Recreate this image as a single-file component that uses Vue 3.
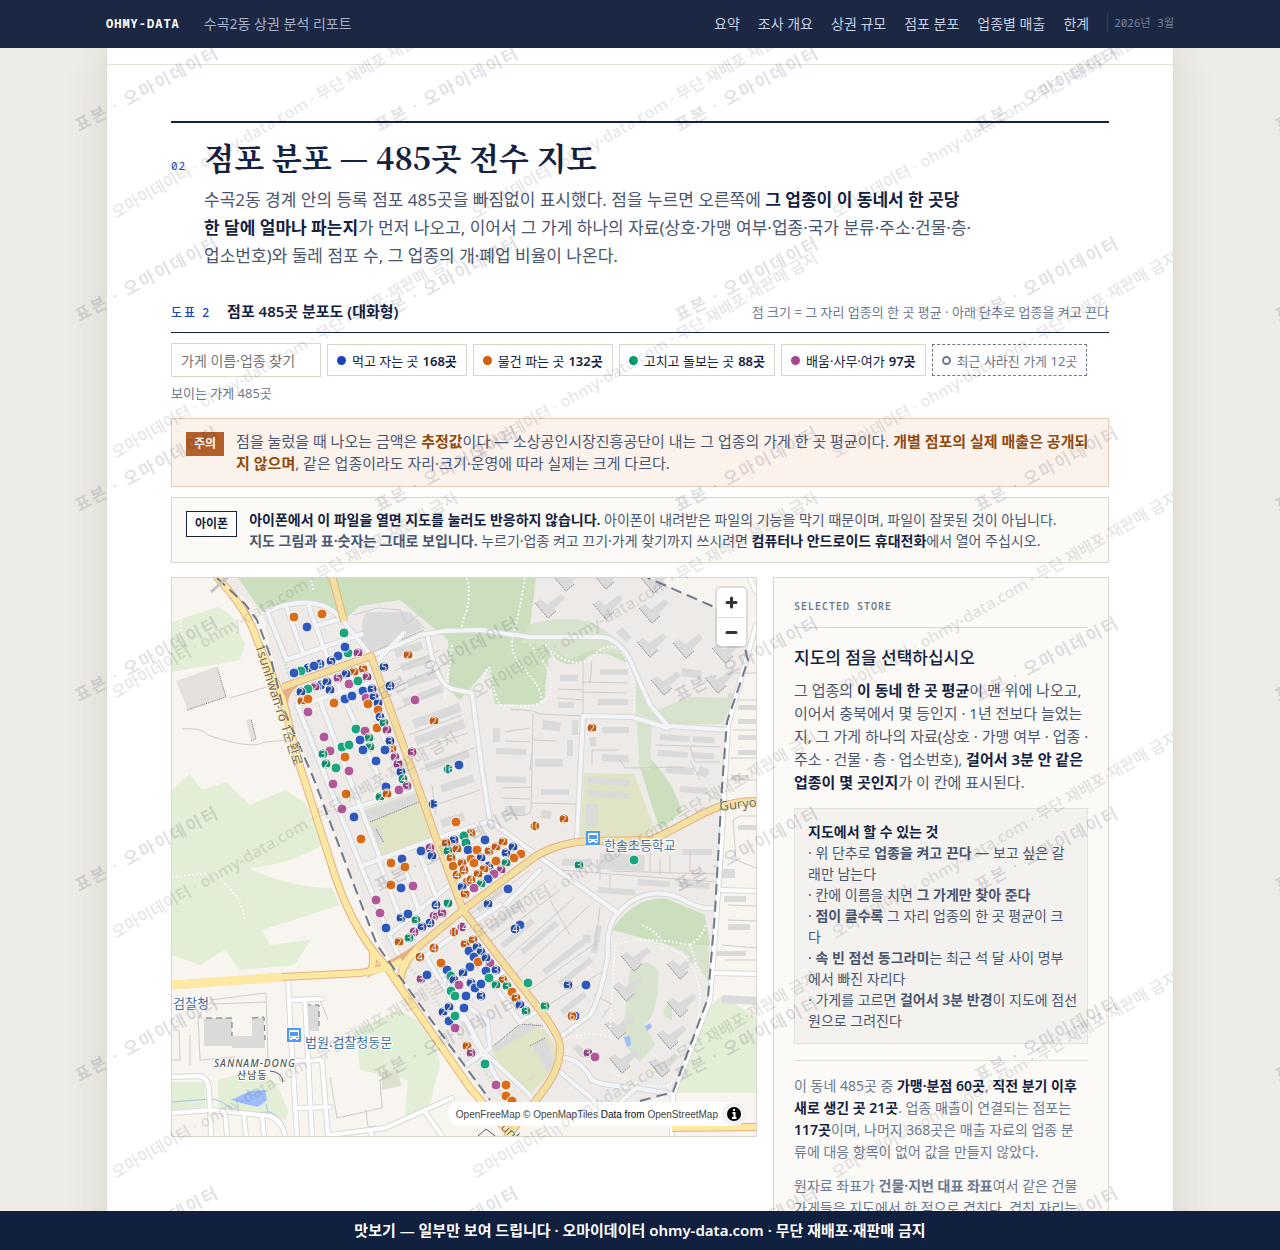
<script setup>
import { ref, computed } from 'vue'

const nav = ['요약', '조사 개요', '상권 규모', '점포 분포', '업종별 매출', '한계']

const groups = [
  { key: 'b', label: '먹고 자는 곳', count: 168, color: '#1a45b8' },
  { key: 'o', label: '물건 파는 곳', count: 132, color: '#d55e00' },
  { key: 'g', label: '고치고 돌보는 곳', count: 88, color: '#009e73' },
  { key: 'p', label: '배움·사무·여가', count: 97, color: '#a8478c' }
]
const colors = { b: '#2f58bd', o: '#d96c18', g: '#1aa57d', p: '#b05898' }
const darks = { b: '#274a9e', o: '#bd5a10', g: '#168a68', p: '#93437e' }
const off = ref([])
const toggle = (k) => {
  off.value = off.value.includes(k) ? off.value.filter((x) => x !== k) : [...off.value, k]
}

// x, y, group, number of stores that share the spot
const stores = `294,617,o 322,614,o 307,627,b 344,633,g 348,653,g 345,647,b 358,653,p,2 338,656,b 331,661,b,5 320,664,b,4
308,668,b,1 314,666,b 301,671,g 294,673,b 408,655,o,2 384,667,b,5 390,686,b,4 415,700,p 434,721,o,2 363,669,o,5
354,672,o,2 346,674,b,2 367,677,p,2 338,678,p,5 349,684,p 358,681,g 321,685,b,1 327,682,b,2 330,690,b,2 315,687,p,2
308,689,g 301,692,b,2 302,701,o,2 308,699,o 308,712,p 363,691,b 372,689,b,3 366,698,p 374,697,b,3 378,703,b,7
368,704,o 345,699,b 352,696,b 334,703,o 378,710,o 380,717,b,4 377,728,o 384,723,g,3 387,730,p,2 324,737,p
356,729,g 365,731,p 369,738,g,2 360,740,b 370,747,g,2 363,750,b 392,749,o,8 390,741,b,3 385,750,b 395,757,p,2
398,764,p,5 412,752,p,3 342,747,g 349,745,g 330,751,p 323,754,g,3 345,757,o 376,761,b 459,765,b 326,764,g,2
336,768,g 349,771,p 333,784,p 346,794,o 342,809,p 354,817,b 361,839,o 401,772,b,3 403,779,g,4 407,786,p,3
399,790,p 386,787,b 380,797,g,2 387,794,o,2 448,769,g,16 433,804,b,13 456,822,o 471,833,o,8 454,840,b,3 446,843,o,3
464,836,g 466,843,g 448,851,g,3 430,848,p,4 432,856,b,2 421,851,b 457,849,o,2 451,858,o,3 468,850,b 453,866,o
462,863,o,2 457,875,o,4 464,870,o,4 467,882,o 462,887,b,2 465,894,o,5 402,859,b 391,863,o 405,867,o 391,885,o
401,888,b 413,886,p 376,900,p 380,913,p 386,928,b 401,918,b,3 408,914,b 436,905,b,4 448,903,g,7 434,916,p,6
442,913,p,5 416,920,g,3 430,923,b,4 422,927,b,3 414,932,p,4 409,938,g,3 399,942,o,2 434,948,o,4 454,932,o,10
462,927,p,14 535,826,o,10 564,819,o,2 579,865,g,3 634,860,g 592,728,o,2 485,840,b 477,850,o 489,851,o,3 496,847,o,2
503,842,o,2 506,853,b,3 513,847,b,2 521,854,o 514,858,o 481,858,b,2 471,859,o 474,863,o 489,866,b,4 496,861,o
506,863,g,2 501,870,p,2 484,869,o,2 494,874,p 478,874,o,2 471,880,o,4 488,879,b 481,884,g,2 474,888,p 508,889,b
488,904,b,2 520,925,b 515,929,b,4 465,944,o,3 473,940,o,3 469,951,b 477,947,b,2 481,952,b,2 474,957,b 478,962,o
490,963,p 486,958,b,2 470,967,b 486,971,b 496,970,b,3 463,973,b,2 489,978,g 503,980,o,3 496,985,g,2 507,986,g,3
528,983,g 568,985,b,3 586,985,b 512,992,o 516,998,o,3 520,1005,b,2 526,1011,g,3 545,1006,g,3 575,1016,b 572,1016,o,6
471,983,b,2 475,988,b 481,984,b 466,996,b 481,996,b,3 464,1008,b 467,1046,o,2 471,1053,p,3 485,1064,g 496,1085,p
506,1085,o 506,1096,o 512,1101,o 588,1053,p,3 595,1057,p 420,957,o,4 441,963,o 421,979,p,3 427,975,b 447,970,b
451,976,g 454,980,b,2 459,985,p 451,991,g 455,996,g 443,1012,b,2 449,1007,b,2 449,1021,b 455,1016,g 455,1028,p`
  .split(/\s+/)
  .map((s) => {
    const [x, y, k, n] = s.split(',')
    return { x: +x, y: +y, k, n }
  })
const shown = computed(() => stores.filter((s) => !off.value.includes(s.k)))

const localRoads = [
  'M267 611 L286 658 M286 606 L303 653 M308 604 L331 668 M267 611 Q320 590 344 622 L371 656',
  'M286 660 L362 634 M316 626 L340 619',
  'M297 705 L361 866 M320 701 L380 858 M342 694 L378 775 M363 686 L402 782 M331 668 L342 694',
  'M298 706 L380 680 M340 813 L417 788 M361 866 L437 838 M385 750 L400 742',
  'M361 866 L389 935 M378 858 L400 918 M401 858 L418 908 M418 850 L436 896 M389 935 L451 884 M389 935 L401 960',
  'M437 838 L490 821 L538 856 L618 913 M404 633 L376 662',
  'M371 656 L410 640 L420 635 L445 631 M428 638 Q436 684 452 689 L472 693 L482 770 L490 821',
  'M445 631 L480 630 L530 637 L600 637 Q617 637 630 660 L650 705 L668 726 L727 730',
  'M577 838 L583 716 L632 717 L668 728 M618 913 C640 888 665 892 680 898 Q700 910 712 908 M618 913 Q606 925 608 955 Q600 1000 590 1015 L562 1036',
  'M425 955 L505 1092 L530 1115 M440 970 L482 1050 L530 1095 M466 946 L520 1022 M420 960 L455 935 L500 905 M505 905 L540 870',
  'M505 970 L470 998 M520 1022 L545 1006 M465 1005 L487 1020 L490 1048 L466 1065',
  'M562 1058 Q580 1058 592 1080 Q600 1085 636 1088 L672 1094 M560 1072 L615 1118 M636 1088 L610 1112 M530 1095 L560 1136'
]

const outerRoads = [
  'M750 578 L756 592 M756 625 L728 725 L721 850 L714 950 L710 1000 L673 1095 L672 1136',
  'M288 978 L290 1020 L297 1136 M305 1000 L312 1136 M290 1000 L322 999 M293 1061 L322 1060 L328 1136 M297 1108 L330 1107',
  'M172 1077 L200 1076 Q208 1078 209 1090 L211 1136 M172 1113 L210 1110 L270 1116 Q282 1120 285 1136 M225 1113 L227 1136 M244 1115 L246 1136 M262 1116 L264 1136',
  'M330 1135 L385 1128 L452 1098 M425 1112 L442 1136 M370 1131 L372 1136 M722 890 L756 891 M714 973 L756 974'
]

const lanes = [
  'M353 615 L378 608 L400 610 L407 624 M394 671 L440 650 M390 690 L452 661 M396 710 L440 690 M409 735 L462 715 M415 750 L468 733 M420 770 L474 748 M435 805 L480 790 M432 785 L436 815',
  'M583 658 L583 716 M583 682 L628 683 M583 692 L626 693 M558 689 L584 690 M592 661 L590 683 M557 698 L583 700 M510 709 L533 711 L540 714 L583 716',
  'M533 714 Q532 770 531 810 Q530 817 515 815 L503 814 M532 740 L556 741 M532 753 L530 770 M505 732 L530 728 M505 741 L530 742 M502 788 L531 787 M502 798 L530 799 M531 803 L577 804',
  'M592 750 L618 750 M592 750 L592 765 M655 745 L720 747 M690 747 L695 762 L720 762 M620 760 L625 768 L684 767 M690 760 L700 780',
  'M600 862 L600 880 M610 875 L610 890 M650 840 L650 872 M660 858 L660 875 M670 855 L670 872 M690 850 L690 872 M610 871 L716 874 M560 870 L716 882',
  'M470 915 L530 870 M480 930 L548 880 M490 942 L560 890 M503 962 L575 897 M515 975 L590 905 M530 990 L600 940 M548 1005 L605 970',
  'M600 907 L595 950 M550 900 L570 935 M594 995 L612 1004 L602 1018 M530 1080 L534 1073',
  'M733 820 L740 816 L756 816 M733 820 L736 860 L756 868 M735 673 L756 673 M733 700 L756 700 M733 730 L756 730 M730 758 L756 758 M728 780 L756 780',
  'M210 1000 L266 993 L268 1060 M199 1019 L205 1000 M212 1004 L266 1002 M173 1030 L179 1030 L180 1060 L172 1060 M190 1035 L190 1065 M198 1015 L200 1060 L235 1057',
  'M230 698 L280 683 M182 729 Q200 727 208 735 Q250 750 265 742 L290 740 M330 1077 L337 1118 L382 1108 L380 1080 M366 1110 L368 1127 L376 1126',
  'M320 1000 L328 1020 M405 625 L422 612 M722 945 L756 948 M725 960 L756 960 M728 905 L756 906 M728 920 L756 921'
]

const paths = [
  'M182 635 L180 620 L190 598 L205 598 L213 578 M467 578 Q472 600 463 620 L461 632 M525 578 Q520 610 514 632 Q508 650 520 665 Q545 690 541 703',
  'M313 590 L311 578 M452 645 L445 700 M545 645 Q570 670 590 660 Q605 640 620 650 Q636 670 634 712',
  'M480 690 Q485 665 490 668 Q492 690 500 705 Q540 710 550 695 Q555 670 530 645',
  'M172 877 L210 873 Q240 890 245 920 M642 925 Q665 935 662 950 L670 945 M706 925 Q700 940 690 945 L700 975 M690 945 Q640 935 615 945 L610 1030',
  'M610 1036 Q570 1030 560 1045 M610 1070 Q640 1090 670 1085 Q700 1050 700 990 Q690 950 670 950'
]

const greens = [
  'M238 578 L470 578 L536 578 L530 625 Q560 615 590 622 Q625 640 632 665 L610 655 Q590 650 583 662 Q560 670 550 650 L545 685 Q548 702 535 705 L495 704 L488 668 L460 700 L449 690 L448 640 L400 600 L360 606 L344 620 Q310 594 262 612 Z',
  'M612 930 Q635 895 668 899 L705 915 L710 945 L680 948 Z',
  'M638 760 L652 760 Q675 785 682 812 L660 830 L650 800 Z'
]
const paleGreens = [
  'M172 622 L218 607 L232 616 L245 645 L240 660 L172 672 Z',
  'M172 790 L190 774 L202 790 L226 782 L250 805 L285 790 L305 802 L322 845 Q290 865 248 868 Q290 888 332 888 L340 905 L262 930 L270 945 L310 940 L295 965 L240 970 L225 950 L200 965 L172 955 Z',
  'M400 1010 L432 1030 L440 1065 L428 1110 L405 1115 L408 1080 L360 1070 L356 1030 Z',
  'M172 1082 L205 1082 L205 1107 L172 1110 Z M218 1080 L255 1070 L275 1082 L288 1110 L286 1120 L218 1110 Z',
  'M722 995 L756 1018 L756 1093 L675 1093 L706 1010 Z'
]
const midGreens = [
  'M530 625 Q560 615 590 622 Q625 640 636 680 L636 712 L660 725 L722 724 L734 698 L690 697 L652 712 L625 655 L590 650 L570 660 L545 645 L520 643 Z',
  'M636 712 L652 726 L650 770 L640 770 Z',
  'M630 970 Q645 955 658 970 Q660 1010 645 1025 L655 1045 L640 1062 Q615 1040 625 1015 Z',
  'M672 1000 Q655 1015 672 1020 Z M650 945 Q690 940 712 990 L708 945 Z'
]

const vShapes = [
  [566, 580], [606, 578], [654, 582], [548, 607], [606, 608], [652, 612], [650, 646], [686, 647], [725, 652], [664, 684], [718, 682],
  [634, 960], [680, 968], [626, 990], [680, 1006], [618, 1028], [670, 1038], [622, 1062], [662, 1066]
]
const blocks = [
  [560, 675, 18, 6, 0], [600, 669, 28, 6, 0], [558, 702, 16, 6, 0], [598, 699, 30, 6, 0], [493, 728, 7, 14, 0], [543, 720, 18, 9, 8],
  [572, 720, 6, 15, 0], [602, 727, 27, 6, 0], [496, 748, 30, 6, 2], [567, 740, 6, 16, 0], [590, 737, 6, 9, 0], [602, 754, 27, 7, 3],
  [535, 759, 28, 8, 0], [660, 734, 30, 6, 4], [693, 736, 22, 6, 4], [658, 750, 30, 6, 4], [692, 752, 22, 6, 4], [496, 776, 30, 6, 2],
  [541, 789, 28, 6, 0], [505, 806, 20, 10, 0], [666, 766, 28, 7, 4], [700, 766, 10, 9, 20], [680, 786, 28, 6, 4], [542, 810, 10, 8, 10],
  [586, 804, 12, 22, 0], [588, 777, 42, 6, 4], [588, 790, 42, 6, 4], [562, 859, 30, 7, 0], [600, 853, 45, 16, 3], [682, 849, 30, 6, 0],
  [638, 879, 32, 6, 4], [680, 881, 30, 6, 4], [598, 887, 38, 6, 4], [728, 693, 10, 5, 0], [738, 705, 18, 5, 0], [738, 719, 18, 5, 0],
  [738, 735, 18, 5, 0], [738, 750, 18, 5, 0], [731, 775, 18, 5, 0], [738, 825, 18, 5, 0], [721, 869, 14, 9, 0], [724, 896, 22, 6, 0],
  [728, 924, 22, 6, 0], [716, 951, 30, 5, 0], [722, 995, 34, 8, 3], [394, 650, 28, 8, -18], [400, 664, 34, 8, -18], [406, 680, 36, 8, -18],
  [402, 699, 42, 8, -20], [412, 720, 50, 9, -20], [414, 737, 52, 9, -20], [424, 764, 46, 8, -18], [440, 785, 34, 8, -18], [440, 820, 24, 8, -18],
  [476, 908, 34, 6, -40], [488, 928, 42, 6, -40], [500, 944, 40, 6, -40], [520, 950, 46, 6, -40], [542, 970, 50, 6, -38], [558, 982, 40, 6, -38],
  [560, 1010, 30, 6, -38], [596, 925, 6, 28, 10], [583, 935, 8, 8, 0], [306, 1005, 13, 26, 0], [204, 1018, 28, 28, 0], [232, 1036, 33, 12, 0],
  [252, 1018, 12, 20, 0], [578, 1044, 14, 7, 45], [622, 627, 14, 8, 45], [682, 668, 20, 8, 8]
]
</script>

<template>
  <div class="app">
    <header class="topbar">
      <div class="bar-inner">
        <a class="brand" href="#top">OHMY-DATA</a>
        <span class="doc">수곡2동 상권 분석 리포트</span>
        <nav>
          <a v-for="n in nav" :key="n" href="#map">{{ n }}</a>
        </nav>
        <time datetime="2026-03">2026년 3월</time>
      </div>
    </header>

    <main>
      <div class="sheet">
        <div class="prev"></div>
        <section id="map">
          <div class="head">
            <span class="no">02</span>
            <h2>점포 분포 — 485곳 전수 지도</h2>
          </div>
          <p class="lede">
            수곡2동 경계 안의 등록 점포 485곳을 빠짐없이 표시했다. 점을 누르면 오른쪽에 <b>그 업종이 이 동네서 한 곳당<br />
            한 달에 얼마나 파는지</b>가 먼저 나오고, 이어서 그 가게 하나의 자료(상호·가맹 여부·업종·국가 분류·주소·건물·층·<br />업소번호)와 둘레 점포 수, 그 업종의 개·폐업 비율이 나온다.
          </p>

          <div class="fig">
            <span class="fig-no">도표 2</span>
            <h3>점포 485곳 분포도 (대화형)</h3>
            <span class="fig-note">점 크기 = 그 자리 업종의 한 곳 평균 · 아래 단추로 업종을 켜고 끈다</span>
          </div>

          <div class="filters">
            <input type="text" placeholder="가게 이름·업종 찾기" aria-label="가게 이름·업종 찾기" />
            <button v-for="g in groups" :key="g.key" class="chip" @click="toggle(g.key)">
              <i :style="{ background: g.color }"></i>{{ g.label }} <b>{{ g.count }}곳</b>
            </button>
            <button class="chip gone"><i></i>최근 사라진 가게 12곳</button>
            <span class="count">보이는 가게 485곳</span>
          </div>

          <div class="notice warn">
            <span class="tag">주의</span>
            <p>점을 눌렀을 때 나오는 금액은 <b>추정값</b>이다 — 소상공인시장진흥공단이 내는 그 업종의 가게 한 곳 평균이다. <b>개별 점포의 실제 매출은 공개되<br />지 않으며</b>, 같은 업종이라도 자리·크기·운영에 따라 실제는 크게 다르다.</p>
          </div>
          <div class="notice phone">
            <span class="tag">아이폰</span>
            <p><b>아이폰에서 이 파일을 열면 지도를 눌러도 반응하지 않습니다.</b> 아이폰이 내려받은 파일의 기능을 막기 때문이며, 파일이 잘못된 것이 아닙니다.<br /><strong>지도 그림과 표·숫자는 그대로 보입니다.</strong> 누르기·업종 켜고 끄기·가게 찾기까지 쓰시려면 <b>컴퓨터나 안드로이드 휴대전화</b>에서 열어 주십시오.</p>
          </div>

          <div class="cols">
            <div class="map">
              <svg class="canvas" viewBox="172 578 584 558" preserveAspectRatio="xMidYMid slice" role="img" aria-label="수곡2동 점포 지도">
                <rect x="172" y="578" width="584" height="558" fill="#f8f4f0" />
                <path d="M217 578 L262 612 L283 700 L315 780 L352 880 L387 955 L490 1104 L640 1104 L673 1092 L708 998 L722 787 L727 722 L748 650 L712 606 L648 578 Z" fill="#edeae7" />
                <path v-for="d in paleGreens" :key="d" :d="d" fill="#e2eed5" />
                <path v-for="d in greens" :key="d" :d="d" fill="#cbdfbf" />
                <path v-for="d in midGreens" :key="d" :d="d" fill="#d8e3ce" />
                <path d="M363 810 L418 792 L433 837 L379 857 Z M584 773 L634 774 L640 790 L655 830 L638 842 L580 836 Z M492 1050 L530 1022 L545 1030 L557 1048 L553 1070 L532 1092 L510 1080 Z" fill="#e0e4c4" />
                <path d="M382 1072 L398 1070 L401 1086 L382 1090 Z" fill="#dde0cb" />
                <g fill="#dadada">
                  <path d="M363 620 L366 612 L410 612 L425 628 L371 652 L361 642 Z" />
                  <path d="M176 681 L216 667 L226 697 L188 710 Z M246 720 L251 719 L256 739 L251 740 Z" fill="#e4e0dc" />
                  <path d="M364 812 L414 794 L419 802 L370 822 Z M370 826 L379 825 L384 842 L376 845 Z" />
                  <path d="M492 1047 L520 1024 L543 1024 L495 1052 Z M532 1046 L545 1036 L555 1062 L548 1072 Z" />
                  <path v-for="v in vShapes" :key="v.join()" :transform="`translate(${v[0]} ${v[1]}) scale(.8)`" d="M-16 -5 L-9 -10 L-1 -3 L16 -16 L21 -11 L8 2 L10 5 L0 14 Z" />
                  <rect v-for="b in blocks" :key="b.join()" :x="b[0]" :y="b[1]" :width="b[2]" :height="b[3]" :transform="`rotate(${b[4]} ${b[0]} ${b[1]})`" />
                </g>
                <g fill="none" stroke="#777" stroke-width="1" stroke-dasharray="1 1">
                  <path d="M371 653 L424 630 M187 710 L226 697 L217 667 M251 741 L256 739 L251 719 M370 822 L419 802 M376 829 L384 843 M492 1047 L520 1024 L543 1026 M530 1046 L545 1038" />
                  <path d="M206 1018 L232 1018 L232 1036 M252 1018 L264 1017 L265 1040 M305 1005 L319 1005 L319 1026" stroke-dasharray="6 4" />
                  <path v-for="v in vShapes" :key="v.join()" :transform="`translate(${v[0]} ${v[1]}) scale(.8)`" d="M-16 -5 L0 14 L10 5" stroke-dasharray="2 1" />
                </g>
                <path d="M231 1100 L250 1091 L265 1090 L267 1100 L258 1107 L245 1104 Z M624 1037 L630 1036 L631 1045 L627 1047 Z M645 1026 L650 1023 L652 1027 L647 1031 Z" fill="#9dbdfc" />
                <path d="M172 1102 L210 1099 Q218 1099 228 1106 Q240 1115 270 1112 Q285 1118 287 1136 M266 1104 L268 1112" fill="none" stroke="#9cc6ee" stroke-width="1" />
                <path v-for="d in lanes" :key="d" :d="d" class="lane" />
                <path v-for="d in paths" :key="d" :d="d" class="foot" />
                <path d="M267 611 L300 705 L361 866 L398 955 L425 985 L505 1100" class="foot tree" />
                <g class="case"><path v-for="d in [...outerRoads, ...localRoads]" :key="d" :d="d" /></g>
                <g class="road"><path v-for="d in localRoads" :key="d" :d="d" /></g>
                <g class="road outer"><path v-for="d in outerRoads" :key="d" :d="d" /></g>
                <g class="main-case">
                  <path d="M332 576 L344 621 M283 687 L371 656 L410 764 L436 838 L463 910 L497 955 L540 1010 Q562 1038 560 1050 Q560 1070 540 1095 L505 1140" />
                  <path d="M172 985 L282 977 L360 973 Q390 969 417 948 L463 910 L536 856 Q560 842 590 841 L650 840 C690 825 710 800 758 801" />
                  <path d="M216 576 Q248 610 257 640 L283 700 L298 760 L330 860 Q350 928 385 965 L470 1088 L515 1140 M400 985 Q400 965 417 950 M284 705 Q284 690 296 683 M672 1128 L758 1127 M366 974 Q376 970 372 948" />
                </g>
                <g class="main-road">
                  <path d="M332 576 L344 621 M283 687 L371 656 L410 764 L436 838 L463 910 L497 955 L540 1010 Q562 1038 560 1050 Q560 1070 540 1095 L505 1140" />
                  <path d="M400 969 L417 948 L463 910 L536 856 Q560 842 590 841 L650 840 C690 825 710 800 758 801" />
                  <path class="bright" d="M172 985 L282 977 L360 973 Q390 969 402 960 M216 576 Q248 610 257 640 L283 700 L298 760 L330 860 Q350 928 385 965 L470 1088 L515 1140 M672 1128 L758 1127 M366 974 Q376 970 372 948 M400 985 Q400 965 417 950" />
                </g>
                <path d="M172 985 L282 977" stroke="#fde9a4" stroke-width="9" />
                <path class="border" d="M217 578 L245 604 L257 620 L270 655 L283 708 L313 777 L352 880 L377 945 L420 1005 L490 1100 M640 1101 L673 1092 L708 998 L715 913 L722 787 L727 722 L748 660 L740 630 L712 606 L648 578" />
                <path d="M211 592 L228 577" stroke="#c4c4c4" stroke-width="3" />
                <path d="M478 1136 L486 1129 L495 1136 M270 1071 Q282 1072 283 1082" fill="none" stroke="#555" />
                <g v-for="p in [[593, 838], [294, 1035]]" :key="p[0]" :transform="`translate(${p[0] - 7} ${p[1] - 7})`">
                  <rect width="14" height="14" fill="#4d9bf5" />
                  <path d="M3 2 h8 a1 1 0 0 1 1 1 v8 h-1 v1 h-2 v-1 h-4 v1 h-2 v-1 h-1 v-8 a1 1 0 0 1 1 -1 Z" fill="#fff" />
                  <path d="M3 4 h8 v4 h-8 Z M3 9 h2 v1 h-2 Z M9 9 h2 v1 h-2 Z" fill="#4d9bf5" />
                </g>
                <g class="label">
                  <text x="604" y="850">한솔초등학교</text>
                  <text x="305" y="1047">법원.검찰청동문</text>
                  <text x="173" y="1008">검찰청</text>
                </g>
                <g class="place">
                  <text x="214" y="1067" font-style="italic">SANNAM-DONG</text>
                  <text x="237" y="1079">산남동</text>
                </g>
                <g class="street">
                  <text transform="translate(255 646) rotate(72)">1sunhwan-ro 1순환로</text>
                  <text transform="translate(720 811) rotate(-7)">Guryong</text>
                  <text transform="translate(500 1128) rotate(45)">unh</text>
                </g>
                <g v-for="(s, i) in shown" :key="i" class="pin">
                  <circle :cx="s.x" :cy="s.y" r="5" :fill="s.n ? darks[s.k] : colors[s.k]" />
                  <text v-if="s.n" :x="s.x" :y="s.y + 4">{{ s.n }}</text>
                </g>
              </svg>
              <div class="zoom">
                <button aria-label="확대"><svg viewBox="0 0 29 29"><path d="M14.500 10 V19 M10 14.500 H19" /></svg></button>
                <button aria-label="축소"><svg viewBox="0 0 29 29"><path d="M10 14.500 H19" /></svg></button>
              </div>
              <div class="attr">
                <span><a href="#ofm">OpenFreeMap</a> <a href="#omt">© OpenMapTiles</a> Data from <a href="#osm">OpenStreetMap</a></span>
                <button aria-label="출처"><svg viewBox="0 0 24 24"><circle cx="12" cy="12" r="7" /><path d="M12 7 v2 M10.500 11 H12.500 V16 M10 16 h4.500" stroke="#fff" stroke-width="2" fill="none" /></svg></button>
              </div>
            </div>

            <aside>
              <div class="kicker">SELECTED STORE</div>
              <h4>지도의 점을 선택하십시오</h4>
              <p class="intro">그 업종의 <b>이 동네 한 곳 평균</b>이 맨 위에 나오고,<br />이어서 충북에서 몇 등인지 · 1년 전보다 늘었는<br />지, 그 가게 하나의 자료(상호 · 가맹 여부 · 업종 ·<br />주소 · 건물 · 층 · 업소번호), <b>걸어서 3분 안 같은<br />업종이 몇 곳인지</b>가 이 칸에 표시된다.</p>
              <div class="howto">
                <b class="t">지도에서 할 수 있는 것</b>
                <p>· 위 단추로 <b>업종을 켜고 끈다</b> — 보고 싶은 갈<br />래만 남는다</p>
                <p>· 칸에 이름을 치면 <b>그 가게만 찾아 준다</b></p>
                <p>· <b>점이 클수록</b> 그 자리 업종의 한 곳 평균이 크<br />다</p>
                <p>· <b>속 빈 점선 동그라미</b>는 최근 석 달 사이 명부<br />에서 빠진 자리다</p>
                <p>· 가게를 고르면 <b>걸어서 3분 반경</b>이 지도에 점선<br />원으로 그려진다</p>
              </div>
              <div class="facts">
                <p>이 동네 485곳 중 <b>가맹·분점 60곳</b>, <b>직전 분기 이후<br />새로 생긴 곳 21곳</b>. 업종 매출이 연결되는 점포는<br /><b>117곳</b>이며, 나머지 368곳은 매출 자료의 업종 분<br />류에 대응 항목이 없어 값을 만들지 않았다.</p>
                <p>원자료 좌표가 <strong>건물·지번 대표 좌표</strong>여서 같은 건물<br />가게들은 지도에서 한 점으로 겹친다. 겹친 자리는<br />숫자로 표시했다.</p>
              </div>
            </aside>
          </div>
        </section>
        <svg class="mark-sheet" aria-hidden="true">
          <template v-for="r in 5" :key="r">
            <text v-for="c in 3" :key="c" :transform="`translate(${c * 360 - 351} ${r * 240 - 69}) rotate(-30)`">오마이데이터 · ohmy-data.com · 무단 재배포·재판매 금지</text>
          </template>
        </svg>
      </div>
      <svg class="mark-page" aria-hidden="true">
        <template v-for="r in 7" :key="r">
          <text v-for="c in 5" :key="c" :transform="`translate(${c * 300 - 221} ${r * 190 - 106}) rotate(-28)`">표본 · 오마이데이터</text>
        </template>
      </svg>
    </main>

    <footer>맛보기 — 일부만 보여 드립니다 · 오마이데이터 ohmy-data.com · 무단 재배포·재판매 금지</footer>
  </div>
</template>

<style>
body { margin: 0; background: #eeece6; }
</style>

<style scoped>
* { box-sizing: border-box; }
.app {
  height: 100vh; display: flex; flex-direction: column; color: #4a5670;
  font-family: "Noto Sans", "Noto Sans CJK KR", sans-serif; font-size: 15px;
}
h2, h3, h4, p { margin: 0; }
button, input { font: inherit; }
a { color: inherit; text-decoration: none; }
b { color: #14213f; font-weight: 600; }
strong { font-weight: 600; }

.topbar { flex: none; background: #1b2743; color: #c5cfe2; z-index: 2; }
.bar-inner { max-width: 1068px; height: 48px; margin: 0 auto; padding-bottom: 2px; display: flex; align-items: center; font-size: 14px; }
.brand { font: 700 12px "Noto Sans Mono", "DejaVu Sans Mono", monospace; letter-spacing: 1px; color: #fff; }
.doc { margin-left: 24px; color: #a4b1cb; }
nav { margin-left: auto; display: flex; gap: 18px; }
time {
  margin-left: 18px; padding-left: 6px; border-left: 1px solid #35415f; line-height: 18px; color: #7383a3;
  font-family: "Noto Sans Mono", "DejaVu Sans Mono", "Noto Sans CJK KR", monospace; font-size: 11px;
}

main { flex: 1; min-height: 0; position: relative; overflow: hidden; }
.sheet {
  position: relative; max-width: 1068px; min-height: 100%; margin: 0 auto; background: #fff;
  border: solid #dcd9d0; border-width: 0 1px; box-shadow: 0 0 40px rgba(60, 50, 30, .12);
}
.prev { height: 17px; border-bottom: 1px solid #e3e0d8; }
section { margin: 56px 64px 0; border-top: 2px solid #14213f; }
.head { display: flex; align-items: baseline; gap: 18px; padding-top: 11px; }
.no { font: 11px "Noto Sans Mono", "DejaVu Sans Mono", monospace; letter-spacing: 1px; color: #1a45b8; }
h2 { font: 700 31px/46px "Noto Serif CJK KR", "Noto Serif KR", "Liberation Serif", serif; color: #14213f; }
.lede { margin-left: 33px; font-size: 17px; line-height: 28px; padding-top: 6px; }

.fig { display: flex; align-items: baseline; margin-top: 30px; padding-bottom: 8px; border-bottom: 1px solid #14213f; line-height: 22px; }
.fig-no { font-size: 12px; letter-spacing: 2px; color: #1a45b8; font-weight: 500; }
h3 { margin-left: 16px; font-size: 15px; font-weight: 600; color: #14213f; }
.fig-note { margin-left: auto; font-size: 13px; color: #6c7890; }

.filters { display: flex; flex-wrap: wrap; align-items: center; gap: 6px; margin-top: 10px; font-size: 13px; }
input { width: 150px; height: 34px; border: 1px solid #d9d6cc; padding: 0 9px; background: #fff; font-size: 14px; }
input::placeholder { color: #757575; }
.chip { display: flex; align-items: center; height: 32px; padding: 0 9px; gap: 4px; border: 1px solid #d9d6cc; background: #fff; color: #14213f; font-size: 13px; }
.chip i { width: 9px; height: 9px; border-radius: 50%; margin-right: 2px; }
.gone { border: 1px dashed #6c7890; color: #6c7890; }
.gone i { border: 2px solid #6c7890; }
.count { flex-basis: 100%; line-height: 20px; color: #6c7890; }

.notice { display: flex; align-items: flex-start; gap: 12px; border: 1px solid #d9d6cc; padding: 11px 14px; }
.tag { flex: none; margin-top: 2px; padding: 0 8px; font-size: 12px; font-weight: 600; line-height: 24px; }
.warn { margin-top: 15px; background: #fcf2ec; border-color: #e6cbb0; padding-bottom: 12px; }
.warn p { line-height: 22px; }
.warn b { color: #8f4a10; }
.warn .tag { background: #b4602a; color: #fff; }
.phone { margin-top: 10px; background: #fbfaf6; }
.phone p { font-size: 14px; line-height: 21px; }
.phone .tag { border: 1px solid #14213f; color: #14213f; background: #fff; }

.cols { display: grid; grid-template-columns: minmax(0, 1fr) 336px; gap: 16px; align-items: start; margin-top: 14px; }
.map { position: relative; height: 560px; border: 1px solid #d9d6cc; overflow: hidden; }
.canvas { display: block; width: 100%; height: 100%; }
.canvas path { stroke-linejoin: round; }
.lane { fill: none; stroke: #cfccca; stroke-width: 1; }
.foot { fill: none; stroke: #f7f7f5; stroke-width: 2; stroke-dasharray: 2 2; }
.tree { stroke: #d5e2d0; stroke-width: 4; }
.case path { fill: none; stroke: #d9d9d9; stroke-width: 6; stroke-linecap: round; }
.road path { fill: none; stroke: #f3f4f6; stroke-width: 4; stroke-linecap: round; }
.outer path { stroke: #fff; }
.main-case path { fill: none; stroke: #e5b083; stroke-width: 8; }
.main-road path { fill: none; stroke: #f3e0a0; stroke-width: 6; }
.main-road .bright { stroke: #fde8a2; }
.border { fill: none; stroke: #72798c; stroke-width: 2; stroke-dasharray: 11 6; }
.label text { font-size: 13px; fill: #41709c; stroke: #fff; stroke-width: 2; paint-order: stroke; }
.place text { font-size: 10px; font-weight: 500; fill: #555; stroke: #fff; stroke-width: 2; paint-order: stroke; letter-spacing: 1px; }
.street text { font-size: 13px; fill: #776a4c; stroke: #fff8dc; stroke-width: 1; paint-order: stroke; }
.pin circle { stroke: #fff; stroke-width: 1; }
.pin text { font-size: 10px; text-anchor: middle; fill: #eee; }
.zoom { position: absolute; top: 10px; right: 10px; width: 29px; border-radius: 4px; background: #fff; box-shadow: 0 0 0 2px rgba(0, 0, 0, .1); }
.zoom button { display: block; width: 29px; height: 29px; padding: 0; border: 0; background: none; }
.zoom button + button { border-top: 1px solid #ddd; }
.zoom svg { display: block; width: 29px; height: 29px; fill: none; stroke: #333; stroke-width: 3; stroke-linecap: round; }
.attr {
  position: absolute; right: 10px; bottom: 10px; height: 24px; padding-left: 8px; display: flex; align-items: center; gap: 4px;
  border-radius: 12px; background: #fff; color: #111; font: 10px "Liberation Sans", sans-serif;
}
.attr a { color: #444; }
.attr button { width: 24px; height: 24px; padding: 0; border: 0; border-radius: 50%; background: #f2f2f2; }
.attr svg { display: block; width: 24px; height: 24px; }

aside { border: 1px solid #d9d6cc; background: #fbfaf6; padding: 20px; }
.kicker {
  padding-bottom: 12px; border-bottom: 1px solid #d9d6cc; color: #6c7890; line-height: 17px; font-size: 10px; font-weight: 600;
  font-family: "Noto Sans Mono", "DejaVu Sans Mono", monospace; letter-spacing: 1px;
}
h4 { margin-top: 17px; font-size: 17px; font-weight: 500; line-height: 26px; color: #14213f; }
.intro { margin-top: 8px; line-height: 23px; white-space: nowrap; }
.howto { margin-top: 14px; padding: 12px 0 12px 13px; border: 1px solid #e3e1da; background: #f3f2ee; font-size: 14px; line-height: 21px; white-space: nowrap; }
.howto .t { display: block; }
.howto p b { color: inherit; }
.facts { margin-top: 16px; padding-top: 14px; border-top: 1px solid #e3e1da; font-size: 14px; line-height: 22px; color: #6c7890; }
.facts p + p { margin-top: 12px; }

.mark-sheet, .mark-page { position: absolute; inset: 0; width: 100%; height: 100%; pointer-events: none; overflow: hidden; }
.mark-sheet text { font-size: 16px; font-weight: 600; fill: rgba(0, 0, 0, .1); }
.mark-page text { font-size: 17px; font-weight: 600; letter-spacing: 2px; fill: rgba(20, 25, 60, .15); }

footer { flex: none; background: #12203f; color: #fff; text-align: center; font-size: 15px; font-weight: 600; line-height: 39px; z-index: 2; }
</style>
